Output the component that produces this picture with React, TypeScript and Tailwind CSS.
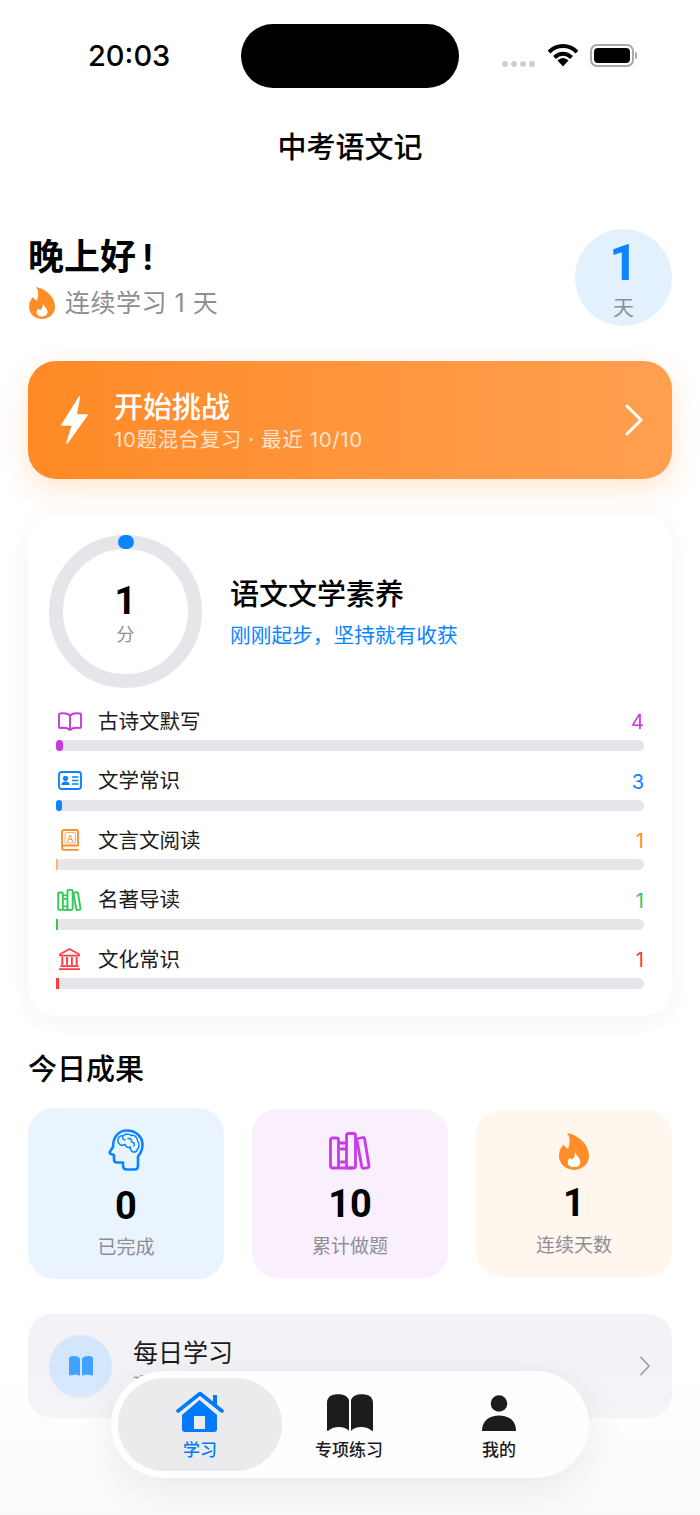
const skills = [
  { name: "古诗文默写", value: 4, text: "text-[#c83ae0]", bar: "bg-[#c83ae0] rounded-full", width: "w-[7px]", icon: "book" },
  { name: "文学常识", value: 3, text: "text-[#0a84ff]", bar: "bg-[#0a84ff] rounded-full", width: "w-[6px]", icon: "card" },
  { name: "文言文阅读", value: 1, text: "text-[#ff8d28]", bar: "bg-[#ffb273]", width: "w-[2px]", icon: "reader" },
  { name: "名著导读", value: 1, text: "text-[#34c759]", bar: "bg-[#34c759]", width: "w-[1.5px]", icon: "books" },
  { name: "文化常识", value: 1, text: "text-[#ff3b46]", bar: "bg-[#ff3b46]", width: "w-[2.5px]", icon: "bank" },
];

const Flame = ({ className }: { className: string }) => (
  <svg viewBox="0 0 26 32" className={className}>
    <path
      d="M7 0C14 1 26 8 26 20C26 27 20 32 13 32C6 32 0 27 0 20C0 15 2 12 4 10C5 12 6 13 8 13.500C9.500 9 10 4 7 0Z"
      fill="#ff8d28"
    />
    <path
      d="M14 16.500C14.500 19.500 18.500 21.500 18.500 25C18.500 28 16 29.500 13 29.500C10 29.500 7.500 28 7.500 25C7.500 23.500 8.500 22.500 9.500 21.500C10 22.500 10.500 23 11.500 23C13 21.500 14 19.500 14 16.500Z"
      fill="#fff"
    />
  </svg>
);

const BooksIcon = ({ className, color, weight }: { className: string; color: string; weight: string }) => (
  <svg viewBox="0 0 42 38" className={className} fill="none" stroke={color} strokeWidth={weight} strokeLinejoin="round">
    <rect x="1.500" y="6" width="8" height="30" rx="2" />
    <path d="M9.500 11H18.500M9.500 36H24" />
    <rect x="17.500" y="1.500" width="9" height="34.500" rx="2" />
    <path d="M29 6.500L34 5.500C35 5.400 35.500 6 35.600 6.800L40 34C40 35 39.500 35.500 38.800 35.700L34.500 36.300C33.500 36.400 33 36 32.800 35L28 8.500C27.900 7.500 28.300 6.800 29 6.500Z" />
    <path d="M12 17H15.500M12 30H15.500" strokeLinecap="round" />
  </svg>
);

const SkillIcon = ({ icon }: { icon: string }) => {
  if (icon === "book")
    return (
      <svg viewBox="0 0 24 19" className="w-[24px] h-[19px]" fill="none" stroke="#c83ae0" strokeWidth="1.900" strokeLinejoin="round">
        <path d="M12 3.500C10 1.500 6 1 2 1.500C1.300 1.600 1 2 1 2.700V15C1 15.800 1.500 16 2.200 16C6 15.500 10 16 12 18C14 16 18 15.500 21.800 16C22.500 16 23 15.800 23 15V2.700C23 2 22.700 1.600 22 1.500C18 1 14 1.500 12 3.500ZM12 3.500V18" />
      </svg>
    );
  if (icon === "card")
    return (
      <svg viewBox="0 0 24 19" className="w-[24px] h-[19px]" fill="none" stroke="#0a84ff" strokeWidth="1.900">
        <rect x="1" y="1" width="22" height="17" rx="2.500" />
        <circle cx="7.500" cy="7.300" r="2.600" fill="#0a84ff" stroke="none" />
        <path d="M3.300 14C3.500 11.500 5 10.500 7.500 10.500C10 10.500 11.500 11.500 11.700 14Z" fill="#0a84ff" stroke="none" />
        <path d="M14 6H20.500M14 9.500H20.500M14 13H20.500" strokeWidth="1.300" />
      </svg>
    );
  if (icon === "reader")
    return (
      <svg viewBox="0 0 18 22" className="w-[18px] h-[22px]" fill="none" stroke="#ff8d28" strokeWidth="1.800" strokeLinejoin="round">
        <path d="M1 18.500V3C1 1.800 1.800 1 3 1H15.500C16.300 1 17 1.700 17 2.500V16.500H3C1.800 16.500 1 17 1 18.500C1 20 1.800 20.800 3 20.800H17.500" />
        <rect x="4" y="3.500" width="10.500" height="10.500" rx="1" strokeWidth=".7" />
        <text x="9.200" y="12.500" textAnchor="middle" fontSize="9.500" fontFamily="Inter" fill="#ff8d28" stroke="none">A</text>
      </svg>
    );
  if (icon === "books") return <BooksIcon className="w-[25px] h-[22px]" color="#34c759" weight="3.300" />;
  return (
    <svg viewBox="0 0 24 23" className="w-[23px] h-[22px]" fill="none" stroke="#ff3b46" strokeWidth="1.700">
      <path d="M12 1L22 6.500V8H2V6.500Z" strokeLinejoin="round" />
      <path d="M4.500 9.500V18M9.500 9.500V18M14.500 9.500V18M19.500 9.500V18" strokeWidth="2" />
      <path d="M2.500 19H21.500M1 22H23" strokeWidth="1.900" />
    </svg>
  );
};

const BrainHead = () => (
  <svg viewBox="0 0 36 42" className="w-[36px] h-[42px]" fill="none" stroke="#0a84ff" strokeLinejoin="round" strokeLinecap="round">
    <path
      d="M19 1.500C27.500 1.500 34.500 7.500 34.500 16C34.500 21 32.500 24.500 30 27.500V37C30 39.500 28.500 40.500 26.500 40.500H19C16.500 40.500 15 39 15 36.500V33.500H9C7 33.500 6 32.500 6 30.500V26L3 25C1.500 24.500 1.300 23.500 2 22.500L5 18C5 8 10.500 1.500 19 1.500Z"
      strokeWidth="2.600"
    />
    <path
      d="M10 13C9 9.500 12 6 15 7C17 4.500 21 4.500 23 6.500C26 5.500 30 8.500 29.500 12C31.500 14 31.500 18 29.500 20C29 22 27.500 23.500 25 23C23 22 22 20 22.500 18M15 7C14 9 15 10.500 17 11M10 13C11 16 14 17 17 15.500M20 9.500C22.500 9 24 10.500 23.500 13C26 13 27 15 26 17M17 15.500C18 18 20 19 22.500 18"
      strokeWidth="1.500"
    />
  </svg>
);

type StatProps = {
  bg: string;
  height: string;
  iconTop: string;
  valueTop: string;
  labelTop: string;
  icon: React.ReactNode;
  value: number;
  label: string;
};

const StatCard = ({ bg, height, iconTop, valueTop, labelTop, icon, value, label }: StatProps) => (
  <div className={`w-[196px] rounded-[26px] flex flex-col items-center ${bg} ${height}`}>
    <div className={`h-[42px] flex items-center justify-center ${iconTop}`}>{icon}</div>
    <div className={`text-[38px] font-bold leading-[46px] text-black font-['Roboto'] ${valueTop}`}>{value}</div>
    <div className={`text-[19px] leading-[28px] text-[#8e8e93] ${labelTop}`}>{label}</div>
  </div>
);

export default function App() {
  return (
    <div
      className="relative w-[700px] h-[1515px] overflow-hidden bg-white text-black"
      style={{ fontFamily: '"Inter", "Noto Sans CJK SC", sans-serif' }}
    >
      {/* status bar */}
      <div className="flex items-start h-[112px] pt-[24px]">
        <div className="ml-[88px] w-[153px] text-[29px] font-medium leading-[64px]">20:03</div>
        <div className="w-[218px] h-[64px] rounded-full bg-black" />
        <div className="ml-[43px] h-[64px] flex items-center">
          <div className="flex gap-[3px] mt-[15px]">
            <div className="w-[6px] h-[6px] rounded-full bg-[#cfcfcf]" />
            <div className="w-[6px] h-[6px] rounded-full bg-[#cfcfcf]" />
            <div className="w-[6px] h-[6px] rounded-full bg-[#cfcfcf]" />
            <div className="w-[6px] h-[6px] rounded-full bg-[#cfcfcf]" />
          </div>
          <svg viewBox="0 0 30 23" className="w-[30px] h-[23px] ml-[13px] mb-[2px]">
            <path d="M1 8C9 0 21 0 29 8" fill="none" stroke="#000" strokeWidth="4" />
            <path d="M6.500 13.500C11.500 8.500 18.500 8.500 23.500 13.500" fill="none" stroke="#000" strokeWidth="4" />
            <path d="M9.500 16.500C13 13 17 13 20.500 16.500L15 22.500Z" fill="#000" />
          </svg>
          <div className="w-[44px] h-[23px] ml-[12px] mb-[2px] rounded-[7px] border-2 border-[#a9a9a9] p-[2px]">
            <div className="w-full h-full rounded-[4px] bg-black" />
          </div>
          <div className="w-[2px] h-[7px] ml-[1px] mb-[2px] rounded-r-full bg-[#a9a9a9]" />
        </div>
      </div>

      <div className="h-[72px] flex items-center justify-center text-[29px] font-medium">中考语文记</div>

      <div className="px-[28px]">
        {/* greeting */}
        <div className="flex items-center justify-between mt-[45px] h-[97px]">
          <div>
            <div className="text-[36px] font-semibold leading-[50px] mt-[-3px]">
              晚上好<span className="ml-[6px]">!</span>
            </div>
            <div className="flex items-center mt-[4px] ml-[1px] h-[34px]">
              <Flame className="w-[26px] h-[32px]" />
              <span className="ml-[10px] mt-[1px] text-[25px] tracking-[0.5px] text-[#8e8e93]">连续学习 1 天</span>
            </div>
          </div>
          <div className="w-[97px] h-[97px] rounded-full bg-[#e3f1ff] flex flex-col items-center">
            <div className="text-[50px] font-bold leading-[58px] mt-[5px] text-[#0a84ff] font-['Roboto']">1</div>
            <div className="text-[21px] leading-[28px] mt-[2px] text-[#8e8e93]">天</div>
          </div>
        </div>

        {/* challenge */}
        <div className="mt-[35px] h-[118px] rounded-[28px] bg-gradient-to-r from-[#ff8a24] to-[#ff9f4f] shadow-[0_10px_28px_rgba(255,141,40,0.22)] flex items-center pl-[33px] pr-[29px] text-white">
          <svg viewBox="0 0 27 48" className="w-[27px] h-[48px]" fill="#fff" stroke="#fff" strokeWidth="1.500" strokeLinejoin="round">
            <path d="M18.500 1L1 29H11.500L6 47L26 19H15Z" />
          </svg>
          <div className="ml-[26px] flex-1 pt-[2px]">
            <div className="text-[29px] font-medium leading-[40px]">开始挑战</div>
            <div className="text-[20.500px] tracking-[0.6px] leading-[28px] mt-[-2px] text-white/75">10题混合复习 · 最近 10/10</div>
          </div>
          <svg viewBox="0 0 18 32" className="w-[18px] h-[32px]" fill="none" stroke="#fff" strokeWidth="3" strokeLinecap="round" strokeLinejoin="round">
            <path d="M2 2L16 16L2 30" />
          </svg>
        </div>

        {/* literacy card */}
        <div className="mt-[36px] h-[501px] rounded-[28px] bg-white shadow-[0_4px_24px_rgba(0,0,0,0.05)] pt-[20px]">
          <div className="flex items-center pl-[21px]">
            <div className="relative w-[153px] h-[153px] shrink-0">
              <svg viewBox="0 0 153 153" className="w-[153px] h-[153px]">
                <circle cx="76.500" cy="76.500" r="69.500" fill="none" stroke="#e5e5ea" strokeWidth="14" />
              </svg>
              <div className="absolute left-[69px] top-[0px] w-[16px] h-[14px] rounded-full bg-[#0a84ff]" />
              <div className="absolute inset-0 flex flex-col items-center justify-center">
                <div className="text-[38px] font-bold leading-[46px] mt-[2px] font-['Roboto']">1</div>
                <div className="text-[18px] leading-[24px] text-[#8e8e93] mt-[-1px]">分</div>
              </div>
            </div>
            <div className="ml-[28px] pt-[3px]">
              <div className="text-[29px] font-medium leading-[40px]">语文文学素养</div>
              <div className="text-[20.700px] leading-[30px] mt-[6px] text-[#0a84ff]">刚刚起步，坚持就有收获</div>
            </div>
          </div>
          <div className="mt-[18px] mx-[28px] flex flex-col gap-[14.600px]">
            {skills.map((item) => (
              <div key={item.name}>
                <div className="flex items-center h-[30px]">
                  <div className="w-[27px] flex justify-center">
                    <SkillIcon icon={item.icon} />
                  </div>
                  <div className="ml-[15px] flex-1 text-[20.500px] mt-[2px] text-[#1c1c1e]">{item.name}</div>
                  <div className={`text-[20px] mt-[2px] ${item.text}`}>{item.value}</div>
                </div>
                <div className="mt-[4px] h-[11px] rounded-full bg-[#e5e5ea]">
                  <div className={`h-full ${item.bar} ${item.width}`} />
                </div>
              </div>
            ))}
          </div>
        </div>

        {/* today */}
        <div className="mt-[34px] text-[29px] font-medium leading-[40px]">今日成果</div>
        <div className="mt-[18px] flex items-start justify-between h-[171px]">
          <StatCard
            bg="bg-[#e9f4ff]"
            height="h-[171px]"
            iconTop="mt-[21px]"
            valueTop="mt-[12px]"
            labelTop="mt-[5px]"
            icon={<BrainHead />}
            value={0}
            label="已完成"
          />
          <div className="mt-[1px]">
            <StatCard
              bg="bg-[#faeffd]"
              height="h-[169px]"
              iconTop="mt-[21px]"
              valueTop="mt-[9px]"
              labelTop="mt-[6px]"
              icon={<BooksIcon className="w-[42px] h-[38px]" color="#c93be6" weight="2.800" />}
              value={10}
              label="累计做题"
            />
          </div>
          <div className="mt-[2px]">
            <StatCard
              bg="bg-[#fff6ee]"
              height="h-[167px]"
              iconTop="mt-[20px]"
              valueTop="mt-[8px]"
              labelTop="mt-[6px]"
              icon={<Flame className="w-[30px] h-[37px]" />}
              value={1}
              label="连续天数"
            />
          </div>
        </div>

        {/* daily study */}
        <div className="mt-[35px] h-[104px] rounded-[24px] bg-[#f2f2f7] flex items-center pl-[21px] pr-[21px]">
          <div className="w-[63px] h-[63px] rounded-full bg-[#d3e6fb] flex items-center justify-center">
            <svg viewBox="0 0 24 20" className="w-[24px] h-[20px]" fill="#3fa2ff">
              <path d="M11 3V20C9 18.500 5 18.500 1 19.500C.500 19.600 0 19.300 0 18.700V3C0 1.500 1 .500 2.500 .300C6 -.300 10 .500 11 3Z" />
              <path d="M13 3V20C15 18.500 19 18.500 23 19.500C23.500 19.600 24 19.300 24 18.700V3C24 1.500 23 .500 21.500 .300C18 -.300 14 .500 13 3Z" />
            </svg>
          </div>
          <div className="ml-[21px] flex-1">
            <div className="text-[25px] leading-[36px] text-[#1c1c1e]">每日学习</div>
            <div className="text-[18px] leading-[26px] text-[#8e8e93]">巩固基础</div>
          </div>
          <svg viewBox="0 0 12 22" className="w-[12px] h-[20px]" fill="none" stroke="#a0a0a5" strokeWidth="1.800" strokeLinecap="round" strokeLinejoin="round">
            <path d="M1.500 1.500L10.500 11L1.500 20.500" />
          </svg>
        </div>
      </div>

      {/* bottom fade sits over the page */}
      <div className="absolute left-0 right-0 bottom-0 h-[145px] bg-gradient-to-b from-transparent to-[#fafafa]" />

      {/* tab bar */}
      <div className="absolute left-[111px] top-[1371px] w-[478px] h-[107px] rounded-full bg-[#fefefe] shadow-[0_10px_40px_rgba(0,0,0,0.08)] p-[7px] flex">
        <div className="w-[164px] h-[93px] rounded-full bg-[#ebebed] flex flex-col items-center">
          <svg viewBox="0 0 48 42" className="w-[48px] h-[42px] mt-[13px]">
            <path d="M6 24L23.500 9L41 24V38C41 40 40 41 38 41H9C7 41 6 40 6 38Z" fill="#007aff" />
            <path d="M2 20L24 2.500L46 20" fill="none" stroke="#007aff" strokeWidth="3.600" strokeLinecap="round" strokeLinejoin="round" />
            <path d="M37 4H41V14L37 11Z" fill="#007aff" />
            <rect x="18" y="25" width="11" height="13" fill="#ebebed" />
          </svg>
          <div className="text-[17px] leading-[24px] font-medium text-[#007aff] mt-[5px]">学习</div>
        </div>
        <div className="w-[134px] flex flex-col items-center">
          <svg viewBox="0 0 46 37" className="w-[46px] h-[37px] mt-[16px] ml-[2px] shrink-0">
            <path d="M22 6V37C18 31.500 6 31.500 1 37C.300 37 0 36.500 0 36V9C0 3 4 .500 10 .200C16 0 20 1.500 22 6Z" fill="#1c1c1e" />
            <path d="M24 6V37C28 31.500 40 31.500 45 37C45.700 37 46 36.500 46 36V9C46 3 42 .500 36 .200C30 0 26 1.500 24 6Z" fill="#1c1c1e" />
          </svg>
          <div className="text-[17px] leading-[24px] font-medium mt-[7px] text-[#1c1c1e]">专项练习</div>
        </div>
        <div className="flex-1 flex flex-col items-center">
          <svg viewBox="0 0 34 36" className="w-[34px] h-[36px] mt-[17px]">
            <circle cx="17" cy="8.500" r="8.300" fill="#1c1c1e" />
            <path d="M0 36C0 25 8 20.500 17 20.500C26 20.500 34 25 34 36Z" fill="#1c1c1e" />
          </svg>
          <div className="text-[17px] leading-[24px] font-medium mt-[7px] text-[#1c1c1e]">我的</div>
        </div>
      </div>
    </div>
  );
}
